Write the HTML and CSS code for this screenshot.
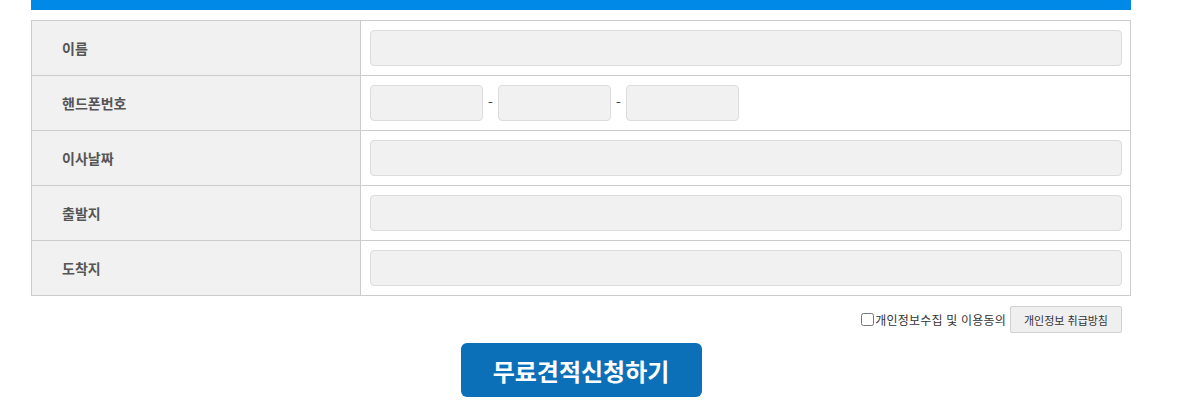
FILE: index.html
```html
<!DOCTYPE html>
<html lang="ko">
<head>
<meta charset="utf-8">
<link rel="stylesheet" href="styles.css">
</head>
<body>
<div class="wrap">
  <div class="topbar"></div>
  <table class="form">
    <tr>
      <th>이름</th>
      <td><input class="field" type="text"></td>
    </tr>
    <tr>
      <th>핸드폰번호</th>
      <td>
        <div class="phone">
          <input class="field short" type="text"><span class="dash">-</span><input class="field short" type="text"><span class="dash">-</span><input class="field short" type="text">
        </div>
      </td>
    </tr>
    <tr>
      <th>이사날짜</th>
      <td><input class="field" type="text"></td>
    </tr>
    <tr>
      <th>출발지</th>
      <td><input class="field" type="text"></td>
    </tr>
    <tr>
      <th>도착지</th>
      <td><input class="field" type="text"></td>
    </tr>
  </table>
  <div class="agree">
    <label class="agree-label"><input type="checkbox" class="chk">개인정보수집 및 이용동의</label>
    <button class="policy" type="button">개인정보 취급방침</button>
  </div>
  <div class="submit-row">
    <button class="submit" type="button">무료견적신청하기</button>
  </div>
</div>
</body>
</html>
```
FILE: styles.css
```css
html, body {
  margin: 0;
  padding: 0;
  background: #fff;
  font-family: "Noto Sans CJK KR", "Noto Sans", sans-serif;
}
.wrap {
  width: 1100px;
  margin-left: 31px;
}
.topbar {
  height: 10px;
  background: #0089e6;
}
.form {
  margin-top: 10px;
  width: 1100px;
  border-collapse: collapse;
  table-layout: fixed;
}
.form th, .form td {
  border: 1px solid #cccccc;
  height: 55px;
  padding: 0;
  box-sizing: border-box;
}
.form th {
  width: 329px;
  background: #f1f1f1;
  text-align: left;
  padding-left: 30px;
  font-size: 14px;
  font-weight: 700;
  color: #555;
}
.form td {
  padding: 0 8px 0 9px;
}
.field {
  display: block;
  width: 100%;
  height: 36px;
  box-sizing: border-box;
  border: 1px solid #dcdcdc;
  border-radius: 4px;
  background: #f1f1f1;
  margin: 0;
}
.phone {
  display: flex;
  align-items: center;
}
.field.short {
  width: 113px;
}
.dash {
  width: 15px;
  text-align: center;
  font-size: 14px;
  color: #444;
  padding-bottom: 2px;
}
.agree {
  display: flex;
  justify-content: flex-end;
  align-items: center;
  padding-right: 9px;
  margin-top: 10px;
  height: 27px;
}
.agree-label {
  display: flex;
  align-items: center;
  font-size: 12px;
  color: #333;
  margin-right: 4px;
  letter-spacing: 0.2px;
}
.chk {
  margin: 0 1px 0 0;
  width: 13px;
  height: 13px;
}
.policy {
  height: 27px;
  padding: 0 13px;
  font-family: "Noto Sans CJK KR", "Noto Sans", sans-serif;
  font-size: 11px;
  color: #333;
  background: #efefef;
  border: 1px solid #d0d0d0;
  border-radius: 2px;
}
.submit-row {
  display: flex;
  justify-content: center;
  margin-top: 10px;
}
.submit {
  width: 241px;
  height: 54px;
  background: #0b70b8;
  color: #fff;
  border: none;
  border-radius: 6px;
  font-family: "Noto Sans CJK KR", "Noto Sans", sans-serif;
  font-size: 24px;
  font-weight: 700;
}
```
